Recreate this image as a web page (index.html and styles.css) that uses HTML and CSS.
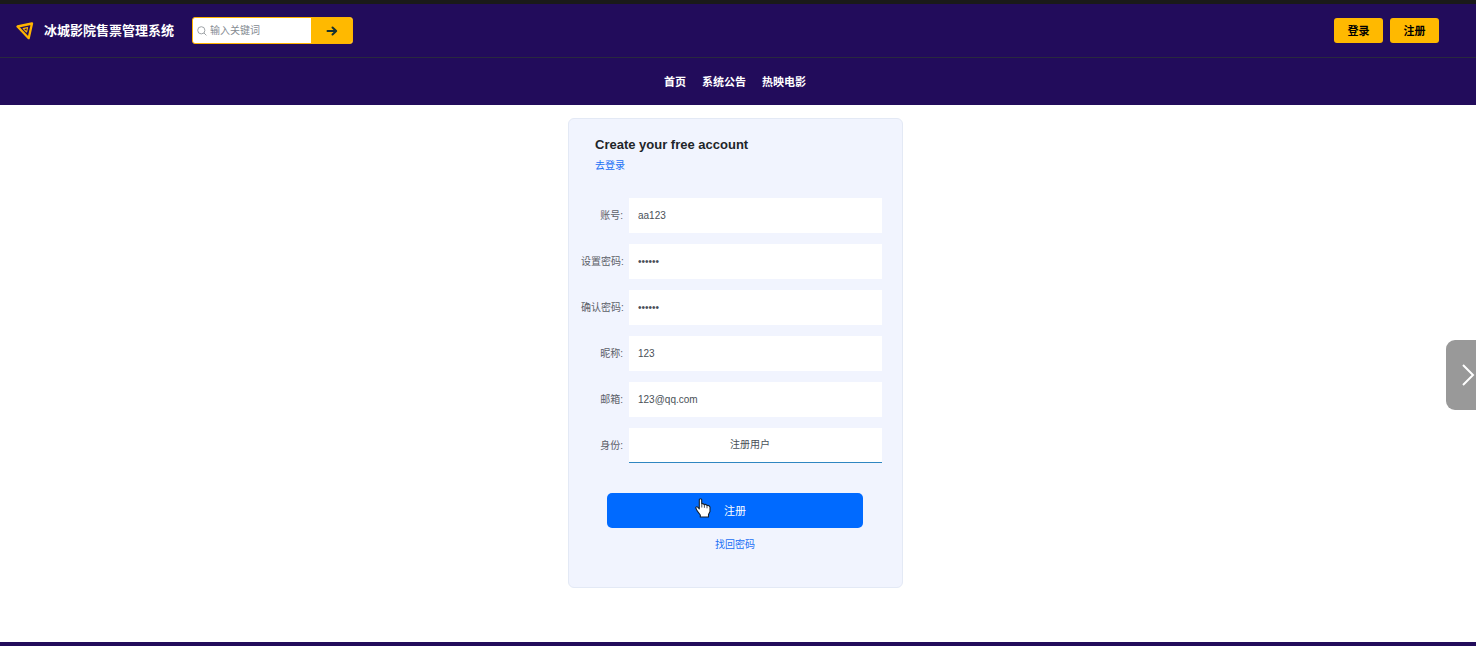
FILE: index.html
```html
<!DOCTYPE html>
<html lang="zh-CN">
<head>
<meta charset="utf-8">
<meta name="viewport" content="width=device-width, initial-scale=1">
<title>冰城影院售票管理系统</title>
<link rel="stylesheet" href="styles.css">
</head>
<body>
<header class="site-header">
  <div class="topbar">
    <a class="brand" href="#">
      <svg class="brand-logo" viewBox="0 0 18 18" aria-hidden="true"><path d="M1.5 4.500L16 1.500L12.700 16.200Z" fill="none" stroke="#ffb400" stroke-width="2.300" stroke-linejoin="round"/><path d="M7.200 6.600L11.600 5.600L10.600 10Z" fill="none" stroke="#ffb400" stroke-width="1.100" stroke-linejoin="round"/></svg>
      <span>冰城影院售票管理系统</span>
    </a>
    <form class="search">
      <svg class="search-icon" viewBox="0 0 10 10" aria-hidden="true"><circle cx="4.300" cy="4.300" r="3.600"/><path d="M7 7l2.400 2.400"/></svg>
      <input class="search-input" type="text" placeholder="输入关键词" aria-label="输入关键词">
      <button class="search-button" type="button" aria-label="搜索">
        <svg class="arrow" viewBox="0 0 12 10" aria-hidden="true"><path d="M1.500 5H10M6.500 1.500L10.200 5L6.500 8.500"/></svg>
      </button>
    </form>
    <div class="account">
      <button class="account-button" type="button">登录</button>
      <button class="account-button" type="button">注册</button>
    </div>
  </div>
  <nav class="main-nav">
    <a href="#">首页</a>
    <a href="#">系统公告</a>
    <a href="#">热映电影</a>
  </nav>
</header>
<main class="page">
  <form class="card">
    <div class="card-head">
      <h1 class="card-title">Create your free account</h1>
      <a class="link" href="#">去登录</a>
    </div>
    <div class="fields">
      <label for="account">账号:</label>
      <input class="field" id="account" type="text" value="aa123">
      <label for="password">设置密码:</label>
      <input class="field" id="password" type="password" value="123456">
      <label for="confirm">确认密码:</label>
      <input class="field" id="confirm" type="password" value="123456">
      <label for="nickname">昵称:</label>
      <input class="field" id="nickname" type="text" value="123">
      <label for="email">邮箱:</label>
      <input class="field" id="email" type="email" value="123@qq.com">
      <label for="role">身份:</label>
      <select class="field role" id="role"><option>注册用户</option></select>
    </div>
    <div class="actions">
      <button class="submit" type="button">注册
        <svg class="pointer" viewBox="0 0 16 20" aria-hidden="true"><path d="M4.300 1.500Q5.500 0 6.700 1.500V6Q8 5 9.200 6.600Q10.800 5.800 12 7.500Q14 6.800 15 9V13.500L13.500 16.500V19H5.300V17L2 12.600L.7 9.700Q1.500 8 3 9.300L4.300 10.800Z" fill="#fff" stroke="#16202c" stroke-width="1.100" stroke-linejoin="round"/><path d="M6.800 6.500V9.500M9.400 7V9.800M12 8V10.300" fill="none" stroke="#16202c" stroke-width=".8"/></svg>
      </button>
      <a class="link" href="#">找回密码</a>
    </div>
  </form>
</main>
<button class="drawer" type="button" aria-label="展开">
  <svg class="chevron" viewBox="0 0 14 24" aria-hidden="true"><path d="M2 2L12 12L2 22"/></svg>
</button>
<footer class="site-footer"></footer>
</body>
</html>
```
FILE: styles.css
```css
* { box-sizing: border-box; }

body {
  margin: 0;
  background: #fff;
  color: #212529;
  font: 10px/14px "Liberation Sans", "Noto Sans CJK SC", sans-serif;
}

a { text-decoration: none; }
button, input, select { margin: 0; border: 0; padding: 0; font: inherit; color: inherit; }
button { cursor: pointer; }
svg { display: block; }

.site-header { background: #220c5b; border-top: 4px solid #1a1a1a; }

.topbar {
  display: flex;
  align-items: center;
  padding: 13px 37px 13px 16px;
  border-bottom: 1px solid #29293f;
}

.brand {
  display: flex;
  align-items: center;
  gap: 10px;
  margin-right: 18px;
  color: #fff;
  font-size: 13px;
  font-weight: 700;
  line-height: 20px;
}
.brand-logo { width: 18px; height: 18px; }

.search {
  display: flex;
  align-items: center;
  width: 161px;
  height: 27px;
  padding-left: 4px;
  border: 1px solid #ffb400;
  border-radius: 3px;
  background: #fff;
  overflow: hidden;
}
.search-icon { flex: none; width: 10px; height: 10px; fill: none; stroke: #a0a4a8; stroke-width: 1; }
.search-input { flex: 1; min-width: 0; height: 25px; padding-left: 3px; background: none; outline: 0; }
.search-input::placeholder { color: #858b92; opacity: 1; }
.search-button { display: grid; place-items: center; width: 41px; height: 25px; background: #ffb900; }
.arrow { width: 12px; height: 10px; fill: none; stroke: #17312f; stroke-width: 2; stroke-linecap: round; stroke-linejoin: round; }

.account { display: flex; gap: 7px; margin-left: auto; }
.account-button {
  width: 49px;
  height: 25px;
  border-radius: 3px;
  background: #ffb900;
  color: #000;
  font-size: 11px;
  font-weight: 700;
}

.main-nav {
  display: flex;
  justify-content: center;
  gap: 16px;
  padding: 16px 6px 15px 0;
  font-size: 11px;
  font-weight: 700;
  line-height: 16px;
}
.main-nav a { color: #fff; }

.page { display: flex; justify-content: center; padding: 13px 5px 54px 0; }

.card {
  width: 335px;
  padding: 18px 20px 35px 12px;
  border: 1px solid #e3e9f5;
  border-radius: 6px;
  background: #f1f4fe;
}
.card-head { padding-left: 14px; }
.card-title { margin: 0 0 6px; font-size: 13px; line-height: 16px; font-weight: 700; }
.link { color: #1a70f5; }

.fields {
  display: grid;
  grid-template-columns: 42px 1fr;
  column-gap: 6px;
  row-gap: 11px;
  align-items: center;
  margin-top: 25px;
  color: #5c6068;
}
.fields label { text-align: right; white-space: nowrap; }
.field {
  width: 100%;
  height: 35px;
  padding: 0 9px;
  border-radius: 0;
  background: #fff;
  color: #495057;
  outline: 0;
}
.role {
  appearance: none;
  padding: 0 15px 0 4px;
  border-bottom: 1px solid #2f86c1;
  text-align: center;
  text-align-last: center;
}

.actions {
  display: flex;
  flex-direction: column;
  align-items: center;
  gap: 10px;
  padding: 30px 19px 0 26px;
}
.submit {
  position: relative;
  width: 100%;
  height: 35px;
  border-radius: 5px;
  background: #006aff;
  color: #fff;
  font-size: 11px;
}
.pointer { position: absolute; left: 88px; top: 5px; width: 16px; height: 20px; }

.drawer {
  position: fixed;
  right: 0;
  top: 340px;
  width: 30px;
  height: 70px;
  padding-left: 15px;
  border-radius: 9px 0 0 9px;
  background: #999;
}
.chevron { width: 14px; height: 24px; fill: none; stroke: #fff; stroke-width: 2; }

.site-footer { padding: 2px; background: #220c5b; }
```
